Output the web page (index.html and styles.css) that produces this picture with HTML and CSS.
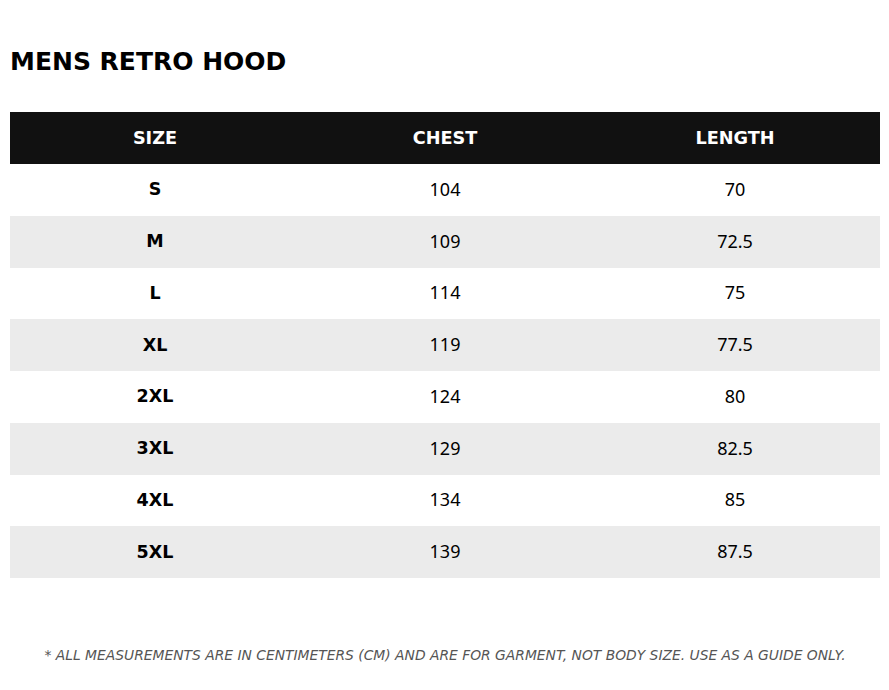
FILE: index.html
```html
<!DOCTYPE html>
<html>
<head>
<meta charset="utf-8">
<link rel="stylesheet" href="styles.css">
</head>
<body>
<div class="page">
  <h1 class="title">MENS RETRO HOOD</h1>
  <table class="chart">
    <thead>
      <tr><th>SIZE</th><th>CHEST</th><th>LENGTH</th></tr>
    </thead>
    <tbody>
      <tr><td class="size">S</td><td>104</td><td>70</td></tr>
      <tr><td class="size">M</td><td>109</td><td>72.5</td></tr>
      <tr><td class="size">L</td><td>114</td><td>75</td></tr>
      <tr><td class="size">XL</td><td>119</td><td>77.5</td></tr>
      <tr><td class="size">2XL</td><td>124</td><td>80</td></tr>
      <tr><td class="size">3XL</td><td>129</td><td>82.5</td></tr>
      <tr><td class="size">4XL</td><td>134</td><td>85</td></tr>
      <tr><td class="size">5XL</td><td>139</td><td>87.5</td></tr>
    </tbody>
  </table>
  <p class="note">* ALL MEASUREMENTS ARE IN CENTIMETERS (CM) AND ARE FOR GARMENT, NOT BODY SIZE. USE AS A GUIDE ONLY.</p>
</div>
</body>
</html>
```
FILE: styles.css
```css
html, body {
  margin: 0;
  padding: 0;
  background: #fff;
}
.page {
  padding: 0 9px 0 10px;
  font-family: "DejaVu Sans", sans-serif;
  color: #000;
}
.title {
  margin: 0 0 35px;
  padding-top: 47px;
  font-size: 25px;
  line-height: 30px;
  font-weight: bold;
}
.chart {
  width: 870px;
  border-collapse: collapse;
  table-layout: fixed;
}
.chart th {
  background: #111;
  color: #fff;
  height: 52px;
  padding: 0;
  font-size: 17.7px;
  font-weight: bold;
  text-align: center;
}
.chart td {
  box-sizing: border-box;
  height: 51.75px;
  padding: 0 0 2px;
  text-align: center;
  font-family: "Noto Sans", sans-serif;
  font-size: 18px;
}
.chart td.size {
  font-family: "DejaVu Sans", sans-serif;
  font-weight: bold;
  font-size: 17.5px;
  padding: 0 0 1px;
}
.chart tbody tr:nth-child(even) td {
  background: #ebebeb;
}
.note {
  margin: 69px 0 0;
  text-align: center;
  font-style: italic;
  font-size: 13.85px;
  color: #555;
}
```
